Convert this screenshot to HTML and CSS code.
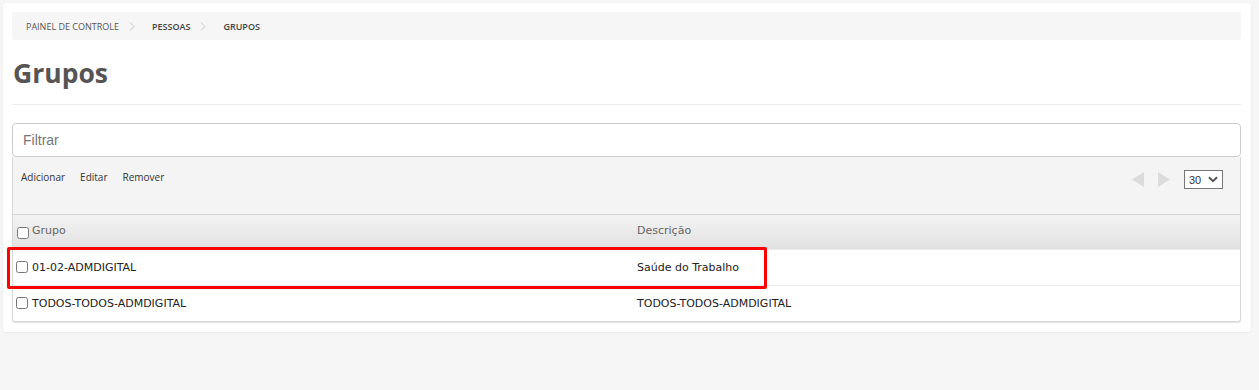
FILE: index.html
```html
<!DOCTYPE html>
<html lang="pt-BR">
<head>
    <meta charset="UTF-8">
    <meta name="viewport" content="width=device-width, initial-scale=1.0">
    <title>Grupos</title>
    <link rel="stylesheet" href="styles.css">
</head>
<body>
    <div class="card">
        <!-- Breadcrumb -->
        <nav class="breadcrumb">
            <a href="#">Painel de controle</a>
            <svg class="sep" width="6" height="9" viewBox="0 0 6 9"><path d="M1 0.5L5 4.5L1 8.5" fill="none" stroke="#c8c8c8" stroke-width="1"/></svg>
            <a href="#" class="strong">Pessoas</a>
            <svg class="sep" width="6" height="9" viewBox="0 0 6 9"><path d="M1 0.5L5 4.5L1 8.5" fill="none" stroke="#c8c8c8" stroke-width="1"/></svg>
            <span class="strong">Grupos</span>
        </nav>

        <h1 class="page-title">Grupos</h1>

        <input class="filter" type="text" placeholder="Filtrar">

        <div class="grid">
            <div class="toolbar">
                <div class="actions">
                    <a href="#">Adicionar</a>
                    <a href="#">Editar</a>
                    <a href="#">Remover</a>
                </div>
                <div class="pager">
                    <svg class="arrow" width="12" height="15" viewBox="0 0 12 15"><path d="M12 0V15L0 7.5Z"/></svg>
                    <svg class="arrow" width="12" height="15" viewBox="0 0 12 15"><path d="M0 0V15L12 7.5Z"/></svg>
                    <div class="page-size">
                        <select>
                            <option>30</option>
                            <option>50</option>
                            <option>100</option>
                        </select>
                        <svg class="chev" width="10" height="7" viewBox="0 0 10 7"><path d="M1 1.2L5 5.2L9 1.2" fill="none" stroke="#555" stroke-width="2"/></svg>
                    </div>
                </div>
            </div>

            <table class="list">
                <thead>
                    <tr>
                        <th class="col-name"><input type="checkbox">Grupo</th>
                        <th>Descrição</th>
                    </tr>
                </thead>
                <tbody>
                    <tr>
                        <td><input type="checkbox">01-02-ADMDIGITAL</td>
                        <td>Saúde do Trabalho</td>
                    </tr>
                    <tr>
                        <td><input type="checkbox">TODOS-TODOS-ADMDIGITAL</td>
                        <td>TODOS-TODOS-ADMDIGITAL</td>
                    </tr>
                </tbody>
            </table>
        </div>
    </div>

    <!-- destaque da linha -->
    <div class="highlight"></div>
</body>
</html>
```

FILE: styles.css
```css
body {
    margin: 0;
    padding: 3px 8px 0 3px;
    background-color: #f6f6f6;
    font-family: "Open Sans", Arial, sans-serif;
    position: relative;
    height: 387px;
    box-sizing: border-box;
}
.card {
    background-color: #fff;
    border-radius: 4px;
    padding: 9px 10px 10px 9px;
    box-shadow: 0 1px 3px rgba(0, 0, 0, 0.06);
}
.breadcrumb {
    display: flex;
    align-items: center;
    height: 28px;
    padding-left: 14px;
    background-color: #f6f6f6;
    border-radius: 3px;
    font-size: 9px;
    text-transform: uppercase;
    color: #555;
}
.breadcrumb a {
    color: #555;
    text-decoration: none;
}
.breadcrumb .strong {
    font-weight: 600;
    color: #444;
}
.breadcrumb .sep {
    margin: 0 17px 0 10px;
}
.page-title {
    margin: 15px 0 0 0;
    padding: 0 0 13px 1px;
    font-size: 26.5px;
    line-height: 36px;
    font-weight: bold;
    color: #555;
    border-bottom: 1px solid #ececec;
}
.filter {
    display: block;
    width: 100%;
    box-sizing: border-box;
    height: 34px;
    margin-top: 18px;
    padding: 0 10px;
    border: 1px solid #ccc;
    border-radius: 4px;
    font-family: Arial, "Liberation Sans", sans-serif;
    font-size: 14px;
    outline: none;
}
.filter::placeholder {
    color: #777;
}
.grid {
    border: 1px solid #d8d8d8;
    border-top: none;
    border-radius: 0 0 3px 3px;
    box-shadow: 0 1px 1px rgba(0, 0, 0, 0.12);
    overflow: hidden;
}
.toolbar {
    display: flex;
    justify-content: space-between;
    align-items: flex-start;
    box-sizing: border-box;
    height: 58px;
    padding: 12px 17px 0 8px;
    background-color: #f4f4f4;
    border-bottom: 1px solid #d4d4d4;
}
.actions {
    display: flex;
    gap: 15px;
    padding-top: 1px;
}
.actions a {
    font-size: 10px;
    color: #333;
    text-decoration: none;
}
.pager {
    display: flex;
    align-items: center;
    gap: 14px;
    padding-top: 1px;
}
.pager .arrow {
    fill: #dcdcdc;
}
.page-size {
    position: relative;
}
.page-size select {
    appearance: none;
    display: block;
    width: 39px;
    height: 19px;
    padding: 0 0 0 4px;
    border: 1px solid #777;
    border-radius: 0;
    background-color: #fff;
    font-family: Arial, "Liberation Sans", sans-serif;
    font-size: 11px;
    color: #333;
}
.page-size .chev {
    position: absolute;
    right: 5px;
    top: 6px;
    pointer-events: none;
}
.list {
    width: 100%;
    border-collapse: collapse;
    font-family: "DejaVu Sans", Verdana, sans-serif;
    font-size: 11px;
}
.list th {
    height: 31px;
    padding: 0 0 3px 0;
    text-align: left;
    font-weight: normal;
    color: #666;
    background: linear-gradient(#f3f3f3, #e1e1e1);
}
.list .col-name {
    width: 624px;
}
.list td {
    height: 35px;
    padding: 0;
    color: #222;
    border-top: 1px solid #ebebeb;
}
.list input[type="checkbox"] {
    width: 12px;
    height: 12px;
    margin: 0 4px 0 3px;
    vertical-align: -2px;
}
.list th input[type="checkbox"] {
    margin: 0 3px 0 4px;
    transform: translateY(3px);
}
.highlight {
    position: absolute;
    left: 7px;
    top: 247px;
    width: 754px;
    height: 36px;
    border: 3px solid #f00;
    border-radius: 2px;
}
```
